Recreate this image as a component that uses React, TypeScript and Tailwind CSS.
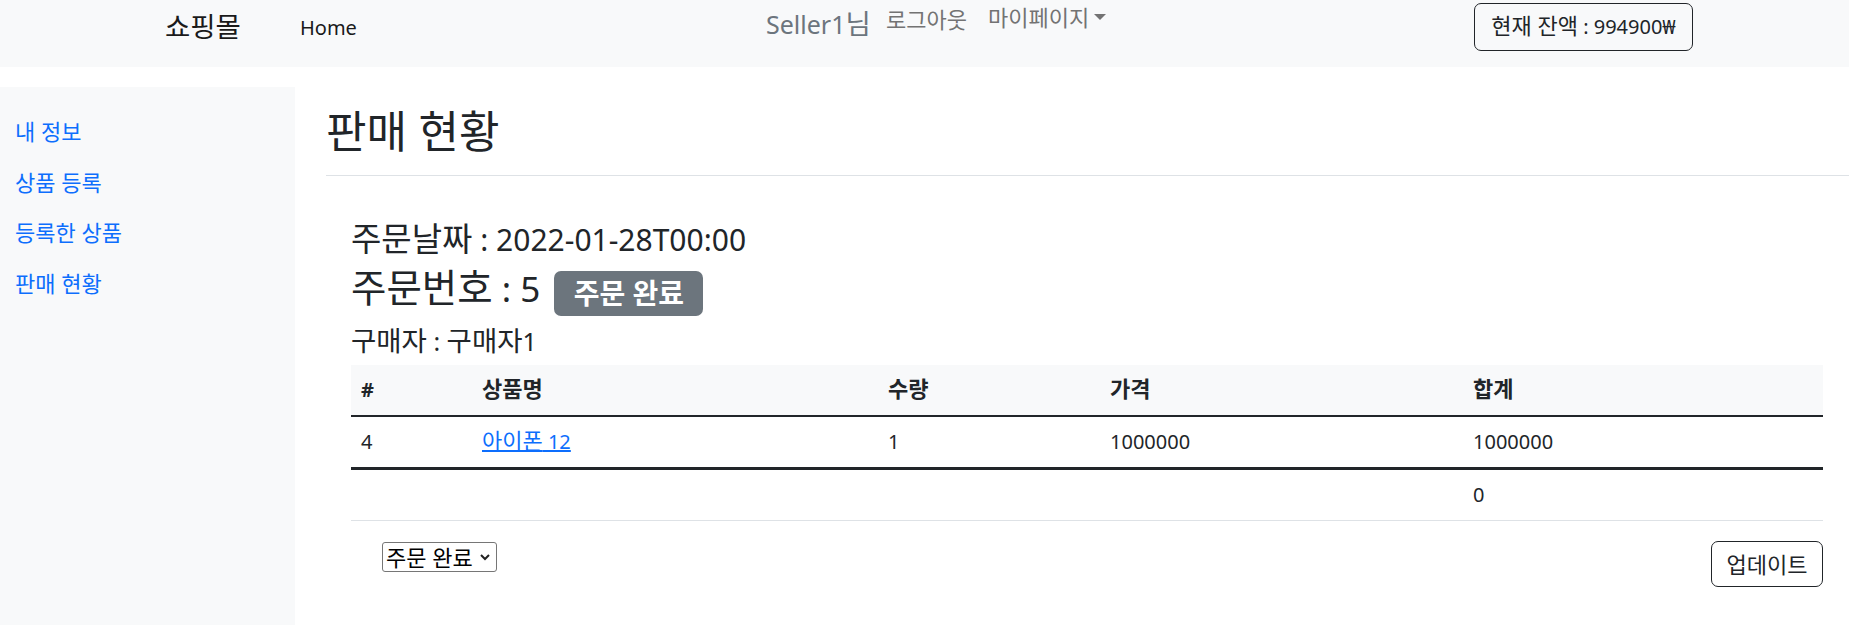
import React from 'react';

const font = "font-['Noto_Sans','Noto_Sans_CJK_KR',sans-serif]";

// Hangul in the reference renders a bit larger than Noto CJK at the same size
function Ko({ children }: { children: React.ReactNode }) {
  return <span className="text-[1.1em] leading-none">{children}</span>;
}

const menu = ['내 정보', '상품 등록', '등록한 상품', '판매 현황'];

function Navbar() {
  return (
    <nav className="h-[67px] bg-[#f8f9fa]">
      <div className="grid grid-cols-[135px_466px_120px_102px_486px_219px] items-start pl-[165px]">
        <span className="mt-[12px] text-[25px] leading-[30px] text-[#1a1a1a]">
          <Ko>쇼핑몰</Ko>
        </span>
        <span className="mt-[13px] text-[20px] leading-[30px] text-[#1a1a1a]">Home</span>
        <span className="mt-[9px] text-[25px] leading-[30px] text-[#6c757d]">
          Seller1<Ko>님</Ko>
        </span>
        <span className="mt-[6px] text-[20px] leading-[30px] text-[#737373]">
          <Ko>로그아웃</Ko>
        </span>
        <span className="mt-[6px] flex items-center text-[20px] leading-[30px] text-[#737373]">
          <Ko>마이페이지</Ko>
          <span className="ml-[5px] h-0 w-0 border-x-[6px] border-t-[6px] border-x-transparent border-t-[#737373]" />
        </span>
        <button className="mt-[3px] h-[48px] w-[219px] rounded-[7px] border border-[#212529] text-[20px] leading-[30px] text-[#212529]">
          <Ko>현재 잔액</Ko> : 994900₩
        </button>
      </div>
    </nav>
  );
}

function Sidebar() {
  return (
    <aside className="w-[295px] shrink-0 bg-[#f8f9fa] pt-[19px]">
      <ul>
        {menu.map((m) => (
          <li key={m}>
            <a href="#" className="flex h-[50.6px] items-center px-[15px] text-[22px] leading-[30px] text-[#0d6efd]">
              {m}
            </a>
          </li>
        ))}
      </ul>
    </aside>
  );
}

const th = 'h-[50px] border-b-2 border-[#212529] px-[10px] py-[10px] text-left font-bold';
const td = 'h-[50px] border-b-[3px] border-[#212529] px-[10px] py-[10px]';
const tf = 'h-[50px] border-b border-[#dee2e6] px-[10px] py-[10px]';

function OrderTable() {
  return (
    <table className="w-full table-fixed border-separate border-spacing-0 text-[20px] leading-[30px] text-[#212529]">
      <colgroup>
        <col className="w-[121px]" />
        <col className="w-[406px]" />
        <col className="w-[222px]" />
        <col className="w-[363px]" />
        <col className="w-[360px]" />
      </colgroup>
      <thead className="bg-[#f8f9fa]">
        <tr>
          <th className={th}>#</th>
          <th className={th}><Ko>상품명</Ko></th>
          <th className={th}><Ko>수량</Ko></th>
          <th className={th}><Ko>가격</Ko></th>
          <th className={th}><Ko>합계</Ko></th>
        </tr>
      </thead>
      <tbody>
        <tr>
          <td className={td}>4</td>
          <td className={td}>
            <a href="#" className="text-[#0d6efd] underline">
              <Ko>아이폰</Ko> 12
            </a>
          </td>
          <td className={td}>1</td>
          <td className={td}>1000000</td>
          <td className={td}>1000000</td>
        </tr>
      </tbody>
      <tfoot>
        <tr>
          <td className={tf}>&nbsp;</td>
          <td className={tf} />
          <td className={tf} />
          <td className={tf} />
          <td className={tf}>0</td>
        </tr>
      </tfoot>
    </table>
  );
}

export default function App() {
  return (
    <div className={`${font} min-h-[625px] bg-white text-[#212529]`}>
      <Navbar />
      <div className="flex min-h-[558px] pt-[20px]">
        <Sidebar />
        <main className="flex-1 pl-[31px] pt-[20px]">
          <h2 className="text-[44px] font-normal leading-[48px]">판매 현황</h2>
          <hr className="mt-[20px] border-t border-[#dee2e6]" />

          <section className="ml-[25px] mr-[26px] pt-[46px]">
            <h4 className="h-[36px] text-[30px] leading-[36px]">
              <Ko>주문날짜</Ko> : 2022-01-28T00:00
            </h4>
            <h3 className="mt-[10px] flex h-[42px] items-center text-[35px] leading-[42px]">
              <span>
                <Ko>주문번호</Ko> : 5
              </span>
              <span className="ml-[14px] mt-[8px] flex h-[45px] w-[149px] shrink-0 items-center justify-center rounded-[7px] bg-[#6c757d] text-[28px] font-bold leading-none text-white">
                주문 완료
              </span>
            </h3>
            <h5 className="mt-[15.5px] h-[30px] text-[25px] leading-[30px]">
              <Ko>구매자</Ko> : <Ko>구매자</Ko>1
            </h5>

            <div className="mt-[9px]">
              <OrderTable />
            </div>

            <div className="mt-[20px] flex items-start justify-between">
              <div className="relative ml-[31px] mt-[1px]">
                <select
                  defaultValue="done"
                  className="h-[30px] w-[115px] appearance-none rounded-[3px] border border-[#767676] bg-white pl-[3px] pr-[20px] text-[22px] leading-[26px] text-black"
                >
                  <option value="done">주문 완료</option>
                  <option value="cancel">주문 취소</option>
                </select>
                <svg
                  className="pointer-events-none absolute right-[7px] top-[12px]"
                  width="10"
                  height="7"
                  viewBox="0 0 10 7"
                  fill="none"
                  stroke="#222"
                  strokeWidth="2"
                >
                  <path d="M1 1l4 4 4-4" />
                </svg>
              </div>
              <button className="h-[46px] w-[112px] rounded-[7px] border border-[#212529] text-[22px] leading-[30px] text-[#212529]">
                업데이트
              </button>
            </div>
          </section>
        </main>
      </div>
    </div>
  );
}
